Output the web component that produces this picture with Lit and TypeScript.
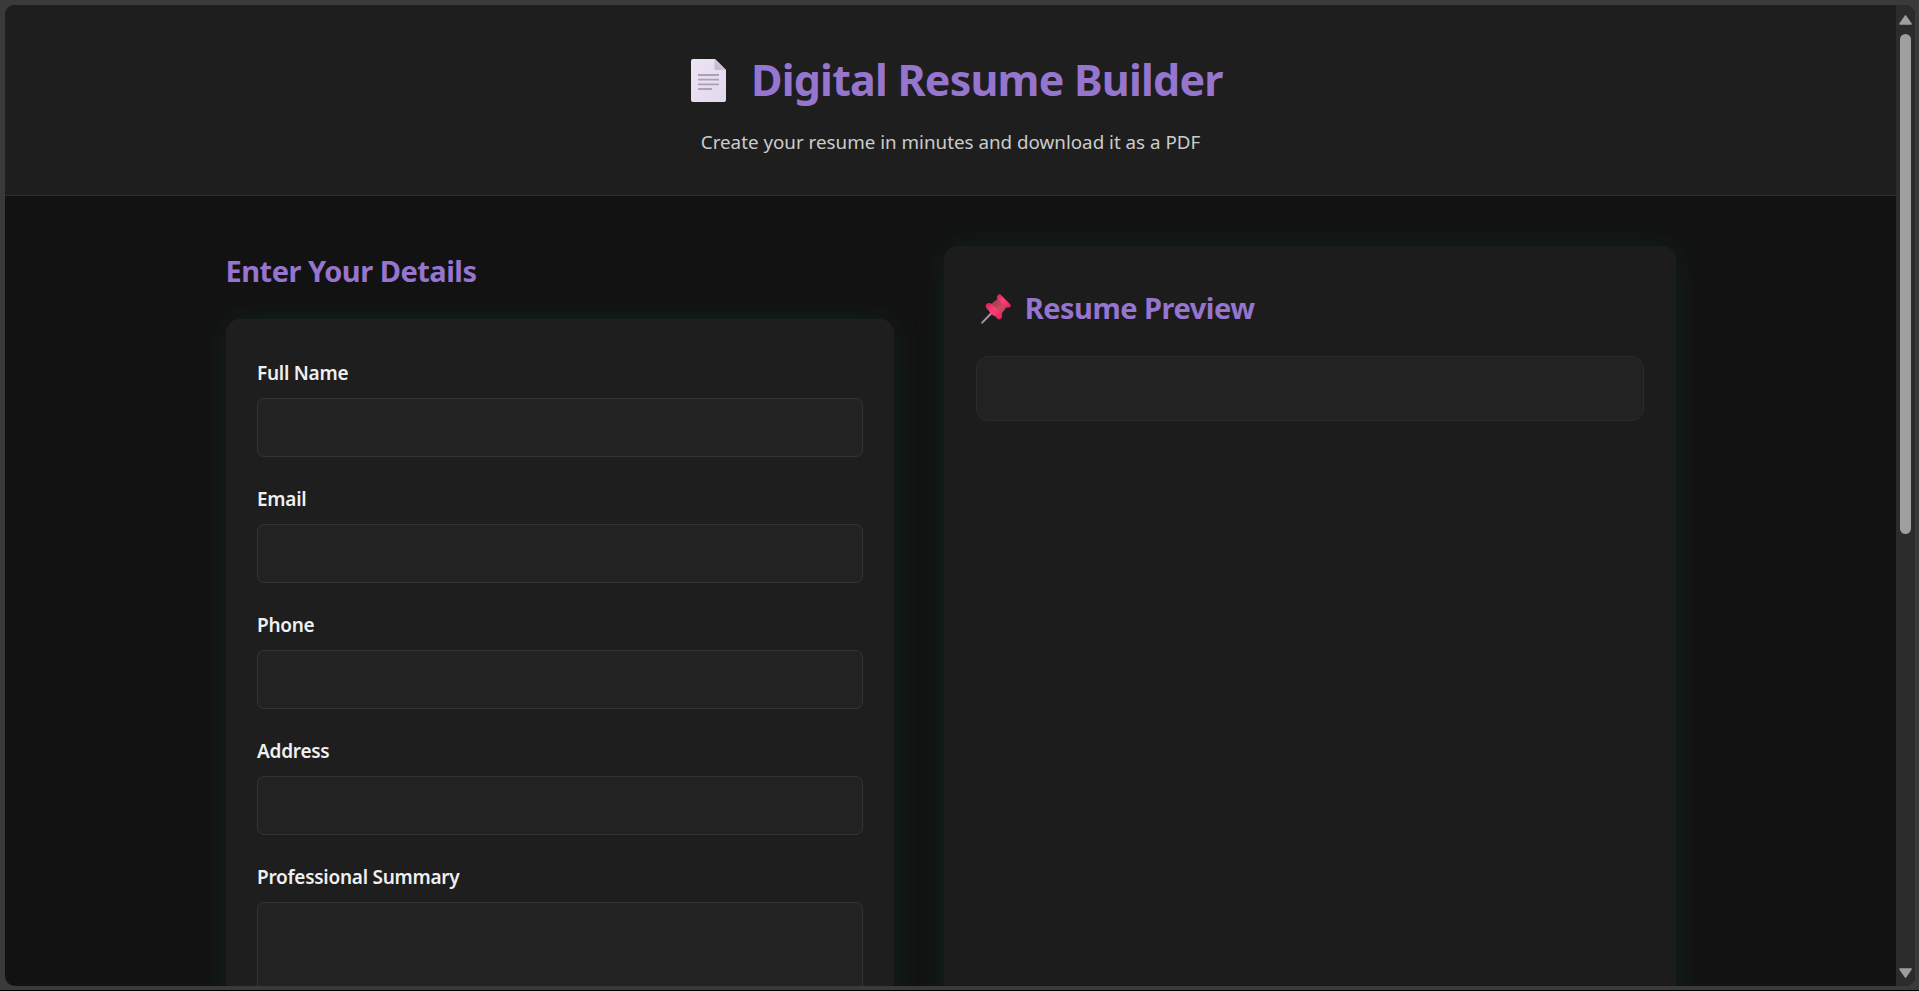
import { LitElement, html, css } from "lit";
import { customElement } from "lit/decorators.js";

const FIELDS = ["Full Name", "Email", "Phone", "Address"];

@customElement("app-root")
class AppRoot extends LitElement {
  static styles = css`
    :host {
      display: block;
      box-sizing: border-box;
      width: 100%;
      height: 991px;
      padding: 5px 4px 4px 5px;
      background: #3a3a3a;
      border-bottom: 1px solid #000;
      overflow: hidden;
      font-family: "Noto Sans", "Open Sans", sans-serif;
    }
    * {
      box-sizing: border-box;
    }
    .window {
      display: flex;
      height: 981px;
      border-radius: 10px;
      overflow: hidden;
      background: #121212;
    }
    .page {
      flex: 1;
      min-width: 0;
      overflow: hidden;
    }
    .header {
      height: 191px;
      padding-top: 45px;
      background: #1e1e1e;
      border-bottom: 1px solid #2c2c2c;
      display: flex;
      flex-direction: column;
      align-items: center;
    }
    h1,
    h2,
    p {
      margin: 0;
      white-space: nowrap;
    }
    h1 {
      display: flex;
      align-items: center;
      font-size: 43px;
      line-height: 60px;
      letter-spacing: -0.8px;
      color: #9575cd;
    }
    .doc {
      display: block;
      margin: 1px 24.7px 0 13px;
    }
    .header p {
      margin-top: 17px;
      font-size: 18.8px;
      line-height: 30px;
      color: #cccccc;
    }
    .columns {
      display: flex;
      align-items: flex-start;
      gap: 50px;
      padding: 50px 0 0 221px;
    }
    .details {
      width: 668px;
      padding-top: 5px;
    }
    h2 {
      display: flex;
      align-items: center;
      font-size: 29px;
      line-height: 40px;
      letter-spacing: -0.5px;
      color: #9575cd;
    }
    .details h2 {
      margin: 0 0 28px -0.5px;
    }
    .card {
      border-radius: 14px;
      box-shadow: 0 0 34px rgba(0, 200, 130, 0.09);
    }
    .form {
      height: 900px;
      padding: 41px 31px 0;
      background: #1e1e1e;
      display: flex;
      flex-direction: column;
      gap: 29px;
    }
    .field {
      display: flex;
      flex-direction: column;
      gap: 12px;
    }
    label {
      font-size: 19px;
      line-height: 26px;
      font-weight: 600;
      letter-spacing: -0.26px;
      color: #f0f0f0;
    }
    .control {
      display: block;
      width: 100%;
      height: 59px;
      margin: 0;
      padding: 15px;
      border: 1px solid #333;
      border-radius: 7px;
      background: #222;
      color: #f0f0f0;
      font: inherit;
      outline: none;
      resize: none;
    }
    .tall {
      height: 150px;
    }
    .preview {
      width: 732px;
      height: 980px;
      padding: 42px 32px 0;
      background: #1c1c1c;
    }
    .pin {
      display: block;
      margin: 1px 13.7px 0 5px;
    }
    .sheet {
      height: 65px;
      margin-top: 28px;
      border: 1px solid #2a2a2a;
      border-radius: 12px;
      background: #222;
    }
    .scrollbar {
      width: 19px;
      padding: 10px 0 8px;
      background: #2c2c2c;
      display: flex;
      flex-direction: column;
      align-items: center;
    }
    .scrollbar svg {
      display: block;
      margin-right: 1px;
    }
    .thumb {
      width: 11px;
      height: 500px;
      margin: 9px 0 auto;
      border-radius: 6px;
      background: #9f9f9f;
    }
  `;

  render() {
    return html`
      <div class="window">
        <div class="page">
          <header class="header">
            <h1>
              <svg class="doc" width="35" height="43" viewBox="0 0 35 43">
                <defs>
                  <linearGradient id="sheet" x1="0" y1="0" x2="1" y2="1">
                    <stop offset="0" stop-color="#ece4f3" />
                    <stop offset="1" stop-color="#e3d8ee" />
                  </linearGradient>
                  <linearGradient id="fold" x1="0" y1="1" x2="1" y2="0">
                    <stop offset="0" stop-color="#bdb6c2" />
                    <stop offset="1" stop-color="#ddd6e3" />
                  </linearGradient>
                </defs>
                <path d="M2 0H24L35 11V41a2 2 0 0 1-2 2H2a2 2 0 0 1-2-2V2a2 2 0 0 1 2-2Z" fill="url(#sheet)" />
                <path d="M23.5 0H24L35 11H25.500a2 2 0 0 1-2-2Z" fill="url(#fold)" />
                <path d="M7 16H28M7 20.700H28M7 25.300H28M7 30H21" stroke="#aaa2b3" stroke-width="1.800" />
              </svg>
              <span>Digital Resume Builder</span>
            </h1>
            <p>Create your resume in minutes and download it as a PDF</p>
          </header>
          <main class="columns">
            <section class="details">
              <h2>Enter Your Details</h2>
              <div class="card form">
                ${FIELDS.map(
                  (name, i) => html`<div class="field">
                    <label for="f${i}">${name}</label>
                    <input class="control" id="f${i}" />
                  </div>`
                )}
                <div class="field">
                  <label for="summary">Professional Summary</label>
                  <textarea class="control tall" id="summary"></textarea>
                </div>
              </div>
            </section>
            <section class="card preview">
              <h2>
                <svg class="pin" width="30" height="30" viewBox="0 0 30 30">
                  <defs>
                    <linearGradient id="disc" x1="0" y1="0" x2="1" y2="1">
                      <stop offset="0" stop-color="#d81b5c" />
                      <stop offset="0.45" stop-color="#fb4273" />
                      <stop offset="1" stop-color="#e81e58" />
                    </linearGradient>
                    <linearGradient id="neck" x1="0" y1="0" x2="1" y2="1">
                      <stop offset="0" stop-color="#94304c" />
                      <stop offset="0.6" stop-color="#cf4760" />
                      <stop offset="1" stop-color="#b63552" />
                    </linearGradient>
                  </defs>
                  <path d="M1.200 28.600L10.500 19" stroke="#a096a6" stroke-width="2" stroke-linecap="round" />
                  <path d="M9.500 10.500L17.500 4L26 12.500L20 20.500Z" fill="url(#neck)" />
                  <path d="M4.500 11.500Q6.500 8 10 9.500L20.500 19.500Q22.500 23.500 18.500 25.500Q16 25 14.500 22.500Q10 21 7.500 16.500Q4.500 14.500 4.500 11.500Z" fill="url(#disc)" />
                  <path d="M16 2.500Q16.800 0 19 0L29.500 10.500Q30.500 13 27.500 13.600Q25.500 13.800 24 12.500L17.500 6Q15.600 4.500 16 2.500Z" fill="url(#disc)" />
                </svg>
                <span>Resume Preview</span>
              </h2>
              <div class="sheet"></div>
            </section>
          </main>
        </div>
        <div class="scrollbar">
          <svg width="13" height="10" viewBox="0 0 13 10">
            <path d="M6.500 1L12 9H1Z" fill="#9f9f9f" stroke="#9f9f9f" stroke-width="1.600" stroke-linejoin="round" />
          </svg>
          <div class="thumb"></div>
          <svg width="13" height="10" viewBox="0 0 13 10">
            <path d="M6.500 9L12 1H1Z" fill="#9f9f9f" stroke="#9f9f9f" stroke-width="1.600" stroke-linejoin="round" />
          </svg>
        </div>
      </div>
    `;
  }
}
